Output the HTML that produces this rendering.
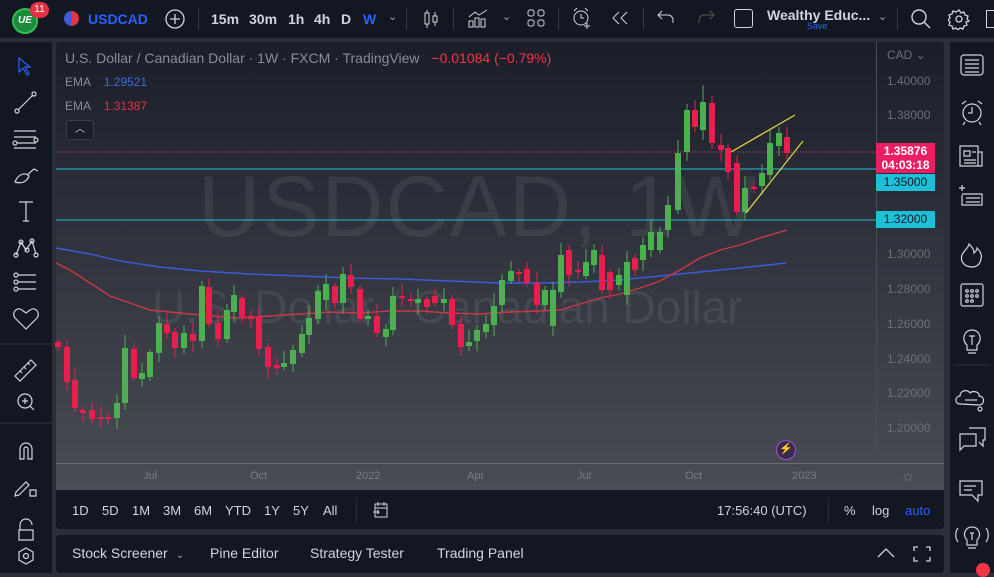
<!DOCTYPE html>
<html><head><meta charset="utf-8"><style>
*{margin:0;padding:0;box-sizing:border-box}
body{width:994px;height:573px;overflow:hidden;background:#2a2e39;font-family:"Liberation Sans",sans-serif;position:relative;color:#d1d4dc}
.abs{position:absolute}
.top{left:0;top:0;width:994px;height:38px;background:#131722}
.tb{font-size:14px;color:#d1d4dc;font-weight:bold;top:11px}
.lt{left:0;top:42px;width:52px;height:531px;background:#131722}
.rt{left:950px;top:42px;width:44px;height:531px;background:#131722}
.chart{left:56px;top:42px;width:888px;height:448px;background:linear-gradient(#1b1e29,#4a4c55);border-radius:4px 4px 0 0}
.rng{left:56px;top:490px;width:888px;height:39px;background:#131722;border-radius:0 0 4px 4px}
.bot{left:56px;top:535px;width:888px;height:38px;background:#131722;border-radius:4px}
.ax{color:#6c6f78;font-size:12px;left:887px}
.rb{font-size:13px;color:#d1d4dc;top:503px}
.bp{font-size:14px;color:#d1d4dc;top:545px}
svg{position:absolute}
</style></head><body>
<div class="abs top"></div>
<!-- logo -->
<div class="abs" style="left:12px;top:8px;width:26px;height:26px;border-radius:50%;background:#1b8a3a;border:2px solid #2fbf5a;color:#fff;font-size:10px;font-weight:bold;font-style:italic;text-align:center;line-height:22px">UE</div>
<div class="abs" style="left:30px;top:2px;width:19px;height:16px;border-radius:8px;background:#e53244;color:#fff;font-size:10px;text-align:center;line-height:16px">11</div>
<div class="abs" style="left:64px;top:11px;width:15px;height:15px;border-radius:50%;background:linear-gradient(90deg,#3b5bdb 50%,#e53244 50%)"></div>
<div class="abs tb" style="left:88px;color:#2962ff">USDCAD</div>
<svg style="left:164px;top:8px" width="22" height="22"><circle cx="11" cy="11" r="9" fill="none" stroke="#d1d4dc" stroke-width="1.3"/><path d="M11 6v10M6 11h10" stroke="#d1d4dc" stroke-width="1.3"/></svg>
<div class="abs" style="left:198px;top:8px;width:1px;height:22px;background:#363a45"></div>
<div class="abs tb" style="left:211px">15m</div>
<div class="abs tb" style="left:249px">30m</div>
<div class="abs tb" style="left:288px">1h</div>
<div class="abs tb" style="left:314px">4h</div>
<div class="abs tb" style="left:341px">D</div>
<div class="abs tb" style="left:363px;color:#2962ff">W</div>
<div class="abs" style="left:388px;top:10px;color:#aaa;font-size:11px">⌄</div>
<div class="abs" style="left:406px;top:8px;width:1px;height:22px;background:#363a45"></div>
<svg style="left:420px;top:8px" width="22" height="22" stroke="#d1d4dc" fill="none"><rect x="5" y="5" width="4" height="11"/><rect x="13" y="8" width="4" height="6"/><path d="M7 2v3M7 16v4M15 4v4M15 14v4"/></svg>
<div class="abs" style="left:453px;top:8px;width:1px;height:22px;background:#363a45"></div>
<svg style="left:466px;top:7px" width="24" height="22" stroke="#d1d4dc" fill="none"><path d="M3 10l6-5 4 3 8-5"/><rect x="3" y="14" width="4" height="6"/><rect x="9" y="11" width="4" height="9"/><rect x="15" y="12" width="4" height="8"/></svg>
<div class="abs" style="left:502px;top:10px;color:#aaa;font-size:11px">⌄</div>
<svg style="left:526px;top:8px" width="20" height="20" stroke="#d1d4dc" fill="none"><rect x="2" y="2" width="6" height="6" rx="2"/><rect x="12" y="2" width="6" height="6" rx="2"/><rect x="2" y="12" width="6" height="6" rx="2"/><rect x="12" y="12" width="6" height="6" rx="2"/></svg>
<div class="abs" style="left:558px;top:8px;width:1px;height:22px;background:#363a45"></div>
<svg style="left:570px;top:6px" width="24" height="24" stroke="#d1d4dc" fill="none"><circle cx="11" cy="12" r="7"/><path d="M11 8v4h3M4 5l3-3M18 5l-3-3M17 17v6M14 20h6"/></svg>
<svg style="left:610px;top:10px" width="22" height="16" stroke="#d1d4dc" fill="none"><path d="M9 2L3 8l6 6M17 2l-6 6 6 6"/></svg>
<div class="abs" style="left:643px;top:8px;width:1px;height:22px;background:#363a45"></div>
<svg style="left:656px;top:9px" width="20" height="16" stroke="#d1d4dc" fill="none"><path d="M6 2L2 6l4 4M2 6h10a5 5 0 0 1 5 5v3"/></svg>
<svg style="left:696px;top:9px" width="20" height="16" stroke="#555" fill="none"><path d="M14 2l4 4-4 4M18 6H8a5 5 0 0 0-5 5v3"/></svg>
<div class="abs" style="left:734px;top:9px;width:19px;height:19px;border:1.4px solid #d1d4dc;border-radius:3px"></div>
<div class="abs tb" style="left:767px;top:7px;font-size:14px">Wealthy Educ...</div>
<div class="abs" style="left:807px;top:21px;color:#2962ff;font-size:9px">Save</div>
<div class="abs" style="left:878px;top:10px;color:#aaa;font-size:11px">⌄</div>
<div class="abs" style="left:897px;top:8px;width:1px;height:22px;background:#363a45"></div>
<svg style="left:910px;top:8px" width="22" height="22" stroke="#d1d4dc" fill="none" stroke-width="1.4"><circle cx="9" cy="9" r="7"/><path d="M14 14l6 6"/></svg>
<svg style="left:948px;top:8px" width="22" height="22" stroke="#d1d4dc" fill="none" stroke-width="1.3"><circle cx="11" cy="11" r="3"/><path d="M11 2l2 3 3-1 1 3 3 1-1 3 2 2-3 1 1 3-3 1-1 3-3-1-2 2-2-2-3 1-1-3-3-1 1-3-2-2 2-2-1-3 3-1 1-3 3 1z"/></svg>
<div class="abs" style="left:986px;top:10px;width:10px;height:18px;border:1.4px solid #d1d4dc;border-right:none"></div>

<div class="abs lt"></div>
<svg style="left:0;top:42px" width="52" height="531" stroke="#d1d4dc" fill="none" stroke-width="1.2">
<path d="M19 16l0 14 4-4 4 7 2-1-4-7 5 0z" stroke="#2962ff"/>
<path d="M18 68l15-15"/><circle cx="17" cy="69" r="2"/><circle cx="34" cy="52" r="2"/>
<path d="M14 89h22M14 95h22M17 101h19M14 106h22"/><circle cx="36" cy="98" r="2"/><circle cx="15" cy="101" r="2"/>
<path d="M15 140c3-8 10-10 14-6-2 6-8 8-14 6zM27 133l7-6 4 2"/>
<path d="M19 160h14M26 160v19M23 179h6"/>
<path d="M16 213l5-13 5 8 6-9 4 13"/><circle cx="16" cy="213" r="2"/><circle cx="21" cy="200" r="2"/><circle cx="32" cy="199" r="2"/><circle cx="36" cy="213" r="2"/><circle cx="27" cy="208" r="2"/>
<path d="M18 233h18M18 240h18M18 247h18"/><circle cx="16" cy="233" r="2"/><circle cx="16" cy="240" r="2"/><circle cx="16" cy="247" r="2"/>
<path d="M26 287l-11-11c-4-5 2-12 7-8l4 3 4-3c5-4 11 3 7 8z"/>
<path d="M0 302h52" stroke="#2a2e39"/>
<path d="M15 334l16-16 5 5-16 16zM20 329l2 2M24 325l2 2M28 321l2 2"/>
<circle cx="25" cy="359" r="7"/><path d="M25 356v6M22 359h6M30 364l4 4"/>
<path d="M0 381h52" stroke="#2a2e39"/>
<path d="M20 417v-10a6 6 0 0 1 12 0v10h-4v-10a2 2 0 0 0-4 0v10z"/>
<path d="M16 450l10-10 3 3-10 10-4 1zM30 448h6v6h-6z"/>
<path d="M20 488v-5a6 6 0 0 1 12 0M19 488h14v10h-14z"/>
<path d="M26 506l7 4v8l-7 4-7-4v-8z"/><circle cx="26" cy="514" r="2.5"/>
</svg>

<div class="abs rt"></div>
<svg style="left:950px;top:42px" width="44" height="531" stroke="#d1d4dc" fill="none" stroke-width="1.2">
<rect x="11" y="13" width="22" height="20" rx="3"/><path d="M15 18h14M15 22h14M15 26h14M15 30h14"/>
<circle cx="22" cy="71" r="9"/><path d="M22 65v6h-4M12 62l4-3M32 62l-4-3M15 80l-2 3M29 80l2 3"/>
<path d="M10 104h18v20h-18zM28 110h4v14h-4M14 109h6v5h-6zM22 110h4M14 118h12M14 121h12"/>
<path d="M12 153v10h20v-11h-20M16 156h14M16 160h14M9 146h6M12 143v6"/>
<path d="M22 225c-8 0-12-6-10-12 2-5 6-6 7-11 4 4 5 6 5 9 2-2 3-3 3-5 4 4 5 8 4 11-1 5-4 8-9 8z"/>
<rect x="11" y="242" width="22" height="22" rx="2"/><circle cx="17" cy="249" r="1.3"/><circle cx="22" cy="249" r="1.3"/><circle cx="27" cy="249" r="1.3"/><circle cx="17" cy="254" r="1.3"/><circle cx="22" cy="254" r="1.3"/><circle cx="27" cy="254" r="1.3"/><circle cx="17" cy="259" r="1.3"/><circle cx="22" cy="259" r="1.3"/>
<path d="M17 303c-6-5-3-15 5-15s11 10 5 15v5h-10zM18 311h8M19 294h6M22 294v9"/>
<path d="M4 323h36" stroke="#2a2e39"/>
<path d="M10 362c-6 0-5-8 0-8 0-6 8-7 10-3 3-3 10-1 9 3 6 0 6 9 0 9z"/><circle cx="30" cy="367" r="2"/><path d="M15 358h12"/>
<path d="M10 392h16v12h-12l-4 4zM19 386h16v12h-2v6l-4-4"/>
<path d="M10 439h22v14h-4v6l-6-6h-12zM14 444h12M14 448h8"/>
<path d="M17 498c-5-5-2-13 5-13s10 8 5 13v5h-10zM18 506h8M20 491h4M22 491v7M8 486c-3 4-3 10 0 14M36 486c3 4 3 10 0 14"/>
</svg>
<div class="abs" style="left:976px;top:563px;width:14px;height:14px;border-radius:50%;background:#f23645"></div>

<div class="abs chart"></div>
<div class="abs" style="left:876px;top:42px;width:1px;height:448px;background:#4a4d56"></div>
<div class="abs" style="left:56px;top:463px;width:888px;height:1px;background:#6a6d76"></div>

<!-- watermark -->
<div class="abs" style="left:198px;top:158px;font-size:86px;color:rgba(255,255,255,0.07);letter-spacing:2px;white-space:nowrap">USDCAD, 1W</div>
<div class="abs" style="left:152px;top:280px;font-size:46px;color:rgba(255,255,255,0.08);white-space:nowrap">U.S. Dollar / Canadian Dollar</div>

<svg id="ch" style="left:0;top:0" width="994" height="573"></svg>

<div class="abs" style="left:65px;top:50px;font-size:14px;color:#8a8d96;white-space:nowrap">U.S. Dollar / Canadian Dollar · 1W · FXCM · TradingView <span style="color:#f23645;margin-left:8px">−0.01084 (−0.79%)</span></div>
<div class="abs" style="left:65px;top:75px;font-size:12px;color:#8a8d96">EMA <span style="color:#3d6ae6;margin-left:10px">1.29521</span></div>
<div class="abs" style="left:65px;top:99px;font-size:12px;color:#8a8d96">EMA <span style="color:#e53244;margin-left:10px">1.31387</span></div>
<div class="abs" style="left:66px;top:120px;width:28px;height:20px;border:1px solid #3a3e48;border-radius:3px;background:#1b1e29;color:#d1d4dc;font-size:10px;text-align:center;line-height:18px">︿</div>

<div class="abs ax" style="top:48px">CAD ⌄</div>
<div class="abs ax" style="top:74px">1.40000</div>
<div class="abs ax" style="top:108px">1.38000</div>
<div class="abs ax" style="top:247px">1.30000</div>
<div class="abs ax" style="top:282px">1.28000</div>
<div class="abs ax" style="top:317px">1.26000</div>
<div class="abs ax" style="top:352px">1.24000</div>
<div class="abs ax" style="top:386px">1.22000</div>
<div class="abs ax" style="top:421px">1.20000</div>
<div class="abs" style="left:876px;top:143px;width:59px;height:30px;background:#e91e63;color:#fff;font-size:12px;font-weight:bold;text-align:center;line-height:14px;padding-top:1px">1.35876<br>04:03:18</div>
<div class="abs" style="left:876px;top:174px;width:59px;height:17px;background:#1ec0d8;color:#131722;font-size:12px;text-align:center;line-height:17px">1.35000</div>
<div class="abs" style="left:876px;top:211px;width:59px;height:17px;background:#1ec0d8;color:#131722;font-size:12px;text-align:center;line-height:17px">1.32000</div>

<div class="abs" style="left:776px;top:440px;width:20px;height:20px;border-radius:50%;background:#3a2a4a;border:1.5px solid #9c4fd6;color:#b56cf0;font-size:11px;text-align:center;line-height:17px">⚡</div>

<div class="abs" style="top:470px;left:0;width:900px;font-size:11px;color:#7a7d86">
<span class="abs" style="left:143px">Jul</span><span class="abs" style="left:250px">Oct</span><span class="abs" style="left:356px">2022</span><span class="abs" style="left:467px">Apr</span><span class="abs" style="left:577px">Jul</span><span class="abs" style="left:685px">Oct</span><span class="abs" style="left:792px">2023</span></div>
<div class="abs" style="left:901px;top:468px;color:#777;font-size:16px">☼</div>

<div class="abs rng"></div>
<div class="abs rb" style="left:72px">1D</div><div class="abs rb" style="left:102px">5D</div><div class="abs rb" style="left:132px">1M</div><div class="abs rb" style="left:163px">3M</div><div class="abs rb" style="left:194px">6M</div><div class="abs rb" style="left:225px">YTD</div><div class="abs rb" style="left:264px">1Y</div><div class="abs rb" style="left:293px">5Y</div><div class="abs rb" style="left:323px">All</div>
<div class="abs" style="left:356px;top:498px;width:1px;height:24px;background:#2a2e39"></div>
<svg style="left:372px;top:501px" width="18" height="18" stroke="#d1d4dc" fill="none"><path d="M3 3h12v13H3zM3 7h12M6 1v4M12 1v4M1 11h6l-2-2M7 11l-2 2"/></svg>
<div class="abs rb" style="left:717px">17:56:40 (UTC)</div>
<div class="abs" style="left:828px;top:498px;width:1px;height:24px;background:#2a2e39"></div>
<div class="abs rb" style="left:844px">%</div><div class="abs rb" style="left:872px">log</div><div class="abs rb" style="left:905px;color:#2962ff">auto</div>

<div class="abs bot"></div>
<div class="abs bp" style="left:72px">Stock Screener <span style="font-size:10px;color:#aaa;margin-left:4px">⌄</span></div>
<div class="abs bp" style="left:210px">Pine Editor</div>
<div class="abs bp" style="left:310px">Strategy Tester</div>
<div class="abs bp" style="left:437px">Trading Panel</div>
<svg style="left:876px;top:545px" width="60" height="18" stroke="#d1d4dc" fill="none" stroke-width="1.3"><path d="M2 12l8-8 8 8M38 6V2h4M50 2h4v4M54 12v4h-4M42 16h-4v-4"/></svg>

<script>
var s=document.getElementById('ch');var h='';
function L(a,b,c,d,col,w,da){h+='<line x1="'+a+'" y1="'+b+'" x2="'+c+'" y2="'+d+'" stroke="'+col+'" stroke-width="'+(w||1)+'"'+(da?' stroke-dasharray="'+da+'"':'')+'/>';}
L(56,152,876,152,'#e05a7a',1,'1,2');
L(56,169,876,169,'#1ec0d8',1);L(56,220,876,220,'#1ec0d8',1);
h+='<polyline fill="none" stroke="#3b5bdb" stroke-width="1.4" points="56,248 90,254 120,261 160,267 200,271 250,274 300,276 350,278 400,279 450,281 500,283 540,283 580,282 620,280 660,276 700,272 740,268 786,263"/>';
h+='<polyline fill="none" stroke="#c8384a" stroke-width="1.4" points="56,263 70,270 90,283 110,296 130,303 150,310 180,313 210,316 240,318 270,316 300,314 330,312 360,313 390,311 420,311 450,313 480,314 510,312 540,311 560,310 580,304 600,298 620,294 640,288 660,281 680,270 700,258 720,250 740,245 760,238 787,230"/>';
var c=[[58,342,347],[67,347,382],[75,380,408],[83,410,413],[92,410,419],[101,418,418],[108,418,418],[117,418,403],[125,403,348],[134,349,378],[142,379,373],[150,377,352],[159,353,323],[167,324,333],[175,332,348],[184,348,333],[193,334,341],[202,341,286],[209,287,324],[218,323,339],[227,339,310],[234,312,295],[242,298,318],[251,317,318],[259,317,349],[268,347,367],[277,366,367],[284,367,363],[293,364,350],[302,353,334],[309,335,318],[318,319,291],[326,300,284],[335,286,303],[343,303,274],[351,275,287],[360,289,319],[368,318,317],[377,316,333],[386,337,329],[393,330,296],[402,297,297],[411,299,301],[418,303,299],[427,299,307],[435,296,303],[444,303,299],[452,299,325],[461,324,347],[469,346,342],[477,341,330],[486,332,324],[494,325,306],[502,305,280],[511,281,271],[519,272,274],[527,269,283],[537,283,305],[545,305,290],[553,326,290],[561,292,255],[569,250,275],[578,270,272],[586,276,262],[594,265,250],[602,255,290],[610,272,290],[619,285,275],[627,295,262],[635,258,270],[643,260,245],[651,250,232],[660,250,232],[668,230,205],[678,210,153],[687,152,110],[695,110,127],[703,130,102],[712,103,143],[721,145,150],[728,148,172],[737,163,212],[745,212,188],[754,187,189],[762,186,173],[770,175,143],[779,146,133],[787,137,153]];
c.forEach(function(k,i){var x=k[0],o=k[1],cl=k[2];var up=cl<o;var col=up?'#4caf50':'#e91e4f';var top=Math.min(o,cl),bot=Math.max(o,cl);var r=((i*37)%11)+3;L(x,top-r,x,bot+((i*23)%9)+3,col,1);if(bot-top<2){top-=1;bot+=1;}h+='<rect x="'+(x-3)+'" y="'+top+'" width="6" height="'+(bot-top)+'" fill="'+col+'"/>';});
L(703,102,703,85,'#4caf50',1);
L(731,152,795,115,'#e6d84a',1.2);L(746,213,803,141,'#e6d84a',1.2);
s.innerHTML=h;
</script>
</body></html>
